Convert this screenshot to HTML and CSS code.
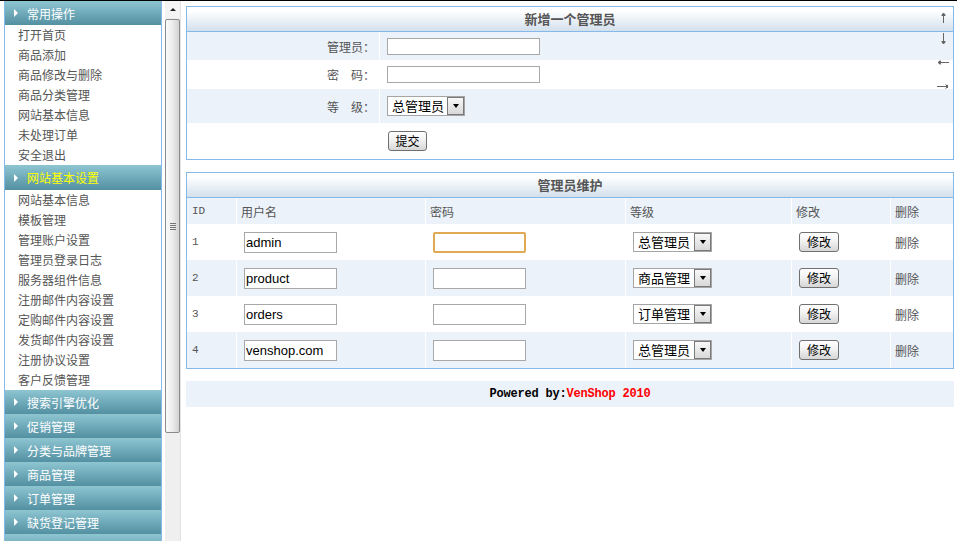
FILE: index.html
```html
<!DOCTYPE html>
<html lang="zh-CN">
<head>
<meta charset="utf-8">
<title>管理员维护</title>
<link rel="stylesheet" href="styles.css">
</head>
<body>
<div class="frameset">
  <aside class="left-frame">
    <nav class="menu">
      <div class="menu-title"><span class="tri"></span>常用操作</div>
      <ul class="menu-list">
        <li>打开首页</li>
        <li>商品添加</li>
        <li>商品修改与删除</li>
        <li>商品分类管理</li>
        <li>网站基本信息</li>
        <li>未处理订单</li>
        <li>安全退出</li>
      </ul>
      <div class="menu-title current"><span class="tri"></span>网站基本设置</div>
      <ul class="menu-list">
        <li>网站基本信息</li>
        <li>模板管理</li>
        <li>管理账户设置</li>
        <li>管理员登录日志</li>
        <li>服务器组件信息</li>
        <li>注册邮件内容设置</li>
        <li>定购邮件内容设置</li>
        <li>发货邮件内容设置</li>
        <li>注册协议设置</li>
        <li>客户反馈管理</li>
      </ul>
      <div class="menu-title"><span class="tri"></span>搜索引擎优化</div>
      <div class="menu-title"><span class="tri"></span>促销管理</div>
      <div class="menu-title"><span class="tri"></span>分类与品牌管理</div>
      <div class="menu-title"><span class="tri"></span>商品管理</div>
      <div class="menu-title"><span class="tri"></span>订单管理</div>
      <div class="menu-title"><span class="tri"></span>缺货登记管理</div>
      <div class="menu-title"><span class="tri"></span>&nbsp;</div>
    </nav>
    <div class="scrollbar">
      <div class="sb-up"><span class="sb-arrow"></span></div>
      <div class="sb-thumb"><span class="sb-grip"></span></div>
      <div class="sb-track"></div>
    </div>
  </aside>

  <main class="main-frame">
    <section class="panel">
      <div class="panel-head">新增一个管理员</div>
      <div class="form-row alt row-a">
        <div class="form-label">管理员：</div>
        <div class="form-value"><input class="txt txt-long" type="text"></div>
      </div>
      <div class="form-row row-b">
        <div class="form-label">密　码：</div>
        <div class="form-value"><input class="txt txt-long" type="password"></div>
      </div>
      <div class="form-row alt row-c">
        <div class="form-label">等　级：</div>
        <div class="form-value"><span class="sel sel-wide"><span class="sel-val">总管理员</span><span class="sel-btn"></span></span></div>
      </div>
      <div class="form-row row-d">
        <div class="form-label"></div>
        <div class="form-value"><button class="btn btn-submit" type="button">提交</button></div>
      </div>
    </section>

    <section class="panel panel-list">
      <div class="panel-head">管理员维护</div>
      <div class="grid-row grid-head alt">
        <div class="num">ID</div>
        <div>用户名</div>
        <div>密码</div>
        <div>等级</div>
        <div>修改</div>
        <div>删除</div>
      </div>
      <div class="grid-row">
        <div class="num">1</div>
        <div><input class="txt" type="text" value="admin"></div>
        <div><input class="txt focus" type="password"></div>
        <div><span class="sel"><span class="sel-val">总管理员</span><span class="sel-btn"></span></span></div>
        <div><button class="btn" type="button">修改</button></div>
        <div class="del">删除</div>
      </div>
      <div class="grid-row alt">
        <div class="num">2</div>
        <div><input class="txt" type="text" value="product"></div>
        <div><input class="txt" type="password"></div>
        <div><span class="sel"><span class="sel-val">商品管理</span><span class="sel-btn"></span></span></div>
        <div><button class="btn" type="button">修改</button></div>
        <div class="del">删除</div>
      </div>
      <div class="grid-row">
        <div class="num">3</div>
        <div><input class="txt" type="text" value="orders"></div>
        <div><input class="txt" type="password"></div>
        <div><span class="sel"><span class="sel-val">订单管理</span><span class="sel-btn"></span></span></div>
        <div><button class="btn" type="button">修改</button></div>
        <div class="del">删除</div>
      </div>
      <div class="grid-row alt">
        <div class="num">4</div>
        <div><input class="txt" type="text" value="venshop.com"></div>
        <div><input class="txt" type="password"></div>
        <div><span class="sel"><span class="sel-val">总管理员</span><span class="sel-btn"></span></span></div>
        <div><button class="btn" type="button">修改</button></div>
        <div class="del">删除</div>
      </div>
    </section>

    <footer class="footer">Powered by:<span class="brand">VenShop 2010</span></footer>

    <svg class="scroll-arrows" width="14" height="82" viewBox="0 0 14 82" aria-hidden="true">
      <g fill="none" stroke="#666" stroke-width="1">
        <path d="M7.5 3v10M5.5 5.5l2-2.5 2 2.5"/>
        <path d="M7.5 23v11M5.5 31.5l2 2.5 2-2.5"/>
        <path d="M2 52.5h11M4.5 50.5l-2.5 2 2.5 2"/>
        <path d="M1 76.5h11M9.5 74.5l2.5 2-2.5 2"/>
      </g>
      <g fill="#666">
        <rect x="6" y="4" width="3" height="2"/>
        <rect x="6" y="31" width="3" height="2"/>
        <rect x="3" y="51" width="2" height="3"/>
        <rect x="10" y="75" width="2" height="3"/>
      </g>
    </svg>
  </main>
</div>
</body>
</html>
```

FILE: styles.css
```css
* { box-sizing: border-box; }

html, body {
  margin: 0;
  padding: 0;
}

body {
  width: 957px;
  height: 541px;
  overflow: hidden;
  background: #fff;
  font-family: "Noto Sans CJK SC", "Noto Sans", sans-serif;
  font-size: 12px;
  color: #555;
}

.frameset {
  display: flex;
  height: 541px;
  border-top: 1px solid #000;
}

/* ---------- left frame ---------- */
.left-frame {
  flex: none;
  width: 181px;
  display: flex;
  overflow: hidden;
}

.menu {
  flex: none;
  margin-left: 4px;
  width: 158px;
  border-left: 1px solid #85b9e9;
  border-right: 1px solid #85b9e9;
  overflow: hidden;
}

.menu-title {
  display: flex;
  align-items: center;
  height: 24px;
  padding-left: 9px;
  color: #fff;
  font-size: 12px;
  white-space: nowrap;
  background: linear-gradient(#8ec5d1, #6aa5b5 60%, #5390a1);
}

.menu-title .tri {
  width: 0;
  height: 0;
  border-left: 4px solid #fff;
  border-top: 4px solid transparent;
  border-bottom: 4px solid transparent;
  margin-right: 9px;
}

.menu-title.current {
  color: #ff0;
  height: 25px;
}

.menu-list {
  list-style: none;
  margin: 0;
  padding: 0;
}

.menu-list li {
  height: 20px;
  line-height: 20px;
  padding-left: 13px;
  color: #555;
  white-space: nowrap;
}

.scrollbar {
  flex: none;
  margin-left: 3px;
  width: 16px;
  display: flex;
  flex-direction: column;
  background: #efefef;
  border-right: 1px solid #e2e2e2;
}

.sb-up {
  height: 17px;
  display: flex;
  align-items: center;
  justify-content: center;
  background: #f4f4f4;
}

.sb-arrow {
  width: 0;
  height: 0;
  border-bottom: 3px solid #222;
  border-left: 3px solid transparent;
  border-right: 3px solid transparent;
}

.sb-thumb {
  margin-top: 1px;
  height: 414px;
  border: 1px solid #8b8b8b;
  border-radius: 2px;
  background: linear-gradient(to right, #fbfbfb, #eeeeee 45%, #d2d2d2);
  display: flex;
  align-items: center;
  justify-content: center;
}

.sb-grip {
  width: 6px;
  height: 7px;
  background: repeating-linear-gradient(#777 0 1px, transparent 1px 2px);
}

.sb-track { flex: 1; }

/* ---------- main frame ---------- */
.main-frame {
  flex: 1;
  position: relative;
  padding: 5px 3px 0 5px;
}

.panel {
  width: 768px;
  border: 1px solid #85b9e9;
  background: #fff;
}

.panel-list { margin-top: 12px; }

.panel-head {
  height: 25px;
  border-bottom: 1px solid #85b9e9;
  background: linear-gradient(#fff 15%, #d3e0ec);
  text-align: center;
  font-weight: bold;
  font-size: 13px;
  line-height: 24px;
  color: #555;
}

.form-row {
  display: grid;
  grid-template-columns: 192px 573px;
  column-gap: 1px;
}

.form-row > div {
  display: flex;
  align-items: center;
}

.alt > div { background: #ebf2fa; }

.row-a { height: 28px; }
.row-b { height: 29px; }
.row-c { height: 34px; }
.row-d { height: 36px; }

.form-label {
  justify-content: flex-end;
  padding-right: 4px;
  color: #555;
}

.txt {
  width: 93px;
  height: 21px;
  margin: 0 0 0 3px;
  padding: 0 1px;
  border: 1px solid #a8a8a8;
  background: #fff;
  font: 13px "Liberation Sans", Arial, sans-serif;
  color: #000;
  outline: none;
}

.txt-long {
  width: 153px;
  height: 17px;
  margin-left: 7px;
}

.txt.focus {
  border: 2px solid #e0aa55;
  border-radius: 2px;
}

.sel {
  display: inline-flex;
  width: 79px;
  height: 20px;
  margin-left: 3px;
  border: 1px solid #a5a5a5;
  background: #fff;
}

.sel-wide {
  width: 78px;
  margin-left: 7px;
}

.sel-val {
  flex: 1;
  padding-left: 4px;
  line-height: 18px;
  font-size: 13px;
  color: #000;
  white-space: nowrap;
}

.sel-btn {
  flex: none;
  width: 17px;
  border: 1px solid #7a7a7a;
  background: linear-gradient(#f8f8f8, #d8d8d8);
  display: flex;
  align-items: center;
  justify-content: center;
}

.sel-btn::after {
  content: "";
  width: 0;
  height: 0;
  border-top: 4px solid #000;
  border-left: 3px solid transparent;
  border-right: 3px solid transparent;
}

.btn {
  width: 40px;
  height: 20px;
  margin-left: 3px;
  padding: 0;
  border: 1px solid #707070;
  border-radius: 3px;
  background: linear-gradient(#ffffff, #f2f2f2 45%, #d6d6d6);
  font: 12px "Noto Sans CJK SC", sans-serif;
  line-height: 18px;
  color: #000;
}

.btn-submit {
  width: 39px;
  margin-left: 8px;
}

.grid-row {
  display: grid;
  grid-template-columns: 49px 188px 199px 165px 98px 62px;
  column-gap: 1px;
  height: 36px;
}

.grid-row > div {
  display: flex;
  align-items: center;
  padding-left: 4px;
  color: #555;
  white-space: nowrap;
}

.grid-head { height: 26px; }

.grid-row > .num {
  padding-left: 5px;
  font: 11px "Liberation Mono", monospace;
  color: #555;
}

.grid-row > .del { padding-left: 4px; color: #555; }

.footer {
  width: 768px;
  height: 26px;
  margin-top: 12px;
  background: #ebf2fa;
  text-align: center;
  font: bold 12px/27px "Liberation Mono", monospace;
  letter-spacing: -0.2px;
  color: #000;
}

.footer .brand { color: #f00; }

.scroll-arrows {
  position: absolute;
  left: 755px;
  top: 9px;
}
```
